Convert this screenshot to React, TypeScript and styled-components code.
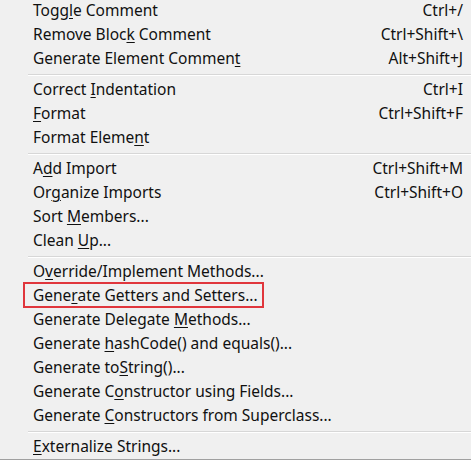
import React from "react";
import styled, { createGlobalStyle } from "styled-components";

const Global = createGlobalStyle`
  html, body { margin: 0; padding: 0; background: #f0f0f0; }
  body { overflow: hidden; }
`;

const Menu = styled.div`
  width: 471px;
  margin-top: -1px;
  background: #f0f0f0;
  font-family: "Noto Sans", "Open Sans", sans-serif;
  font-size: 15.5px;
  color: #111;
  border-bottom: 1px solid #a0a0a0;
  display: flex;
  flex-direction: column;
`;

const Row = styled.div`
  height: 24px;
  box-sizing: border-box;
  display: flex;
  align-items: center;
  justify-content: space-between;
  padding: 0 8px 2px 33px;
  white-space: nowrap;
`;

const Label = styled.span<{ $marked?: boolean }>`
  position: relative;
  ${(p) =>
    p.$marked &&
    `
    &::after {
      content: "";
      position: absolute;
      left: -10px;
      right: -6px;
      top: -2px;
      bottom: -2px;
      border: 2px solid #e0363c;
    }
  `}
`;

const Key = styled.span`
  color: #111;
`;

const Mn = styled.span`
  text-decoration: underline;
  text-underline-offset: 2px;
  text-decoration-thickness: 1px;
`;

const Sep = styled.div`
  height: 7px;
  display: flex;
  flex-direction: column;
  padding-left: 28px;
  padding-top: 3px;
  box-sizing: border-box;
  &::before {
    content: "";
    height: 1px;
    background: #d7d7d7;
  }
  &::after {
    content: "";
    height: 1px;
    background: #ffffff;
  }
`;

type Item = { pre: string; mn: string; post: string; key?: string; marked?: boolean } | "sep";

const items: Item[] = [
  { pre: "Togg", mn: "l", post: "e Comment", key: "Ctrl+/" },
  { pre: "Remove Bloc", mn: "k", post: " Comment", key: "Ctrl+Shift+\\" },
  { pre: "Generate Element Commen", mn: "t", post: "", key: "Alt+Shift+J" },
  "sep",
  { pre: "Correct ", mn: "I", post: "ndentation", key: "Ctrl+I" },
  { pre: "", mn: "F", post: "ormat", key: "Ctrl+Shift+F" },
  { pre: "Format Eleme", mn: "n", post: "t" },
  "sep",
  { pre: "A", mn: "d", post: "d Import", key: "Ctrl+Shift+M" },
  { pre: "Or", mn: "g", post: "anize Imports", key: "Ctrl+Shift+O" },
  { pre: "Sort ", mn: "M", post: "embers..." },
  { pre: "Clean ", mn: "U", post: "p..." },
  "sep",
  { pre: "O", mn: "v", post: "erride/Implement Methods..." },
  { pre: "Gene", mn: "r", post: "ate Getters and Setters...", marked: true },
  { pre: "Generate Delegate ", mn: "M", post: "ethods..." },
  { pre: "Generate ", mn: "h", post: "ashCode() and equals()..." },
  { pre: "Generate to", mn: "S", post: "tring()..." },
  { pre: "Generate C", mn: "o", post: "nstructor using Fields..." },
  { pre: "Generate ", mn: "C", post: "onstructors from Superclass..." },
  "sep",
  { pre: "", mn: "E", post: "xternalize Strings..." },
];

export default function App() {
  return (
    <>
      <Global />
      <Menu>
        {items.map((it, i) =>
          it === "sep" ? (
            <Sep key={i} />
          ) : (
            <Row key={i}>
              <Label $marked={it.marked}>
                {it.pre}
                <Mn>{it.mn}</Mn>
                {it.post}
              </Label>
              {it.key && <Key>{it.key}</Key>}
            </Row>
          )
        )}
      </Menu>
    </>
  );
}
